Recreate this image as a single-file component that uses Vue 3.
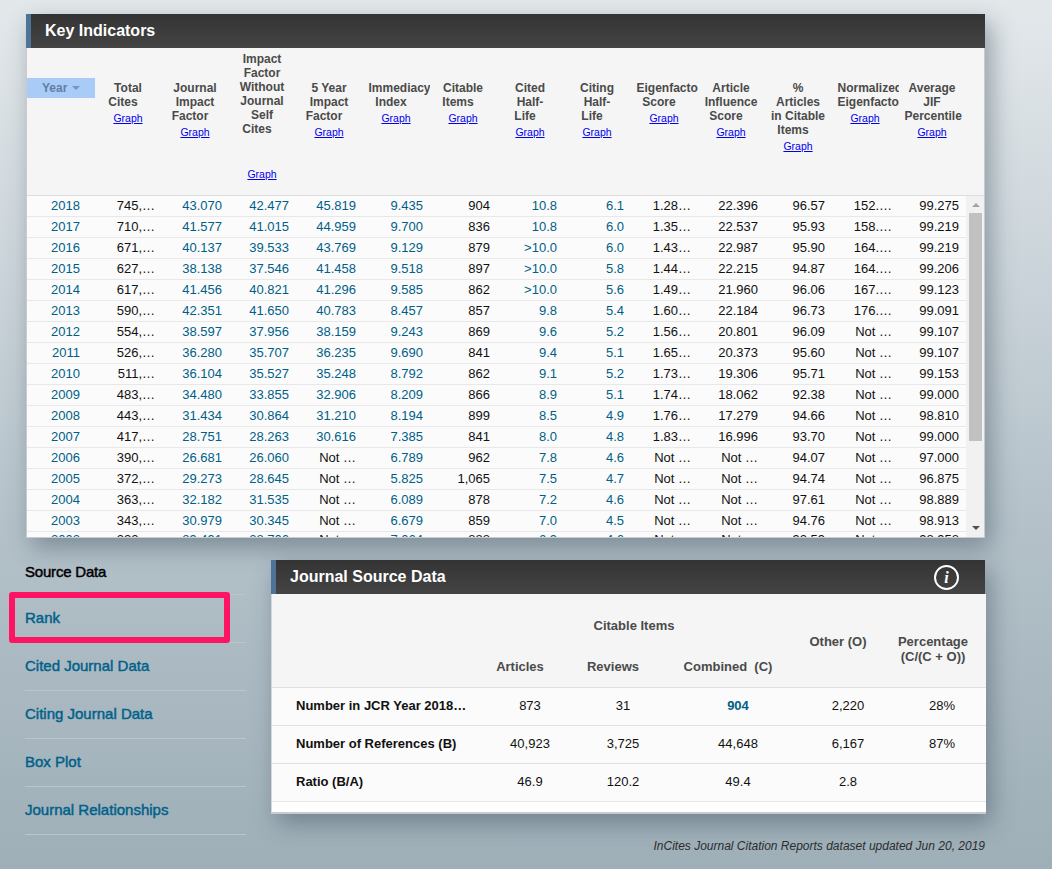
<script setup>
const heads = [
  { t: 'Total Cites' }, { t: 'Journal Impact Factor' },
  { t: 'Impact Factor Without Journal Self Cites', tall: true },
  { t: '5 Year Impact Factor' }, { t: 'Immediacy Index' }, { t: 'Citable Items' },
  { t: 'Cited Half-Life' }, { t: 'Citing Half-Life' }, { t: 'Eigenfactor Score' },
  { t: 'Article Influence Score' }, { t: '% Articles in Citable Items' },
  { t: 'Normalized Eigenfactor' }, { t: 'Average JIF Percentile' }
]
const teal = [0, 2, 3, 4, 5, 7, 8]
const n = 'Not …'
const raw = [
  ['2018','745,…','43.070','42.477','45.819','9.435','904','10.8','6.1','1.28…','22.396','96.57','152.…','99.275'],
  ['2017','710,…','41.577','41.015','44.959','9.700','836','10.8','6.0','1.35…','22.537','95.93','158.…','99.219'],
  ['2016','671,…','40.137','39.533','43.769','9.129','879','>10.0','6.0','1.43…','22.987','95.90','164.…','99.219'],
  ['2015','627,…','38.138','37.546','41.458','9.518','897','>10.0','5.8','1.44…','22.215','94.87','164.…','99.206'],
  ['2014','617,…','41.456','40.821','41.296','9.585','862','>10.0','5.6','1.49…','21.960','96.06','167.…','99.123'],
  ['2013','590,…','42.351','41.650','40.783','8.457','857','9.8','5.4','1.60…','22.184','96.73','176.…','99.091'],
  ['2012','554,…','38.597','37.956','38.159','9.243','869','9.6','5.2','1.56…','20.801','96.09',n,'99.107'],
  ['2011','526,…','36.280','35.707','36.235','9.690','841','9.4','5.1','1.65…','20.373','95.60',n,'99.107'],
  ['2010','511,…','36.104','35.527','35.248','8.792','862','9.1','5.2','1.73…','19.306','95.71',n,'99.153'],
  ['2009','483,…','34.480','33.855','32.906','8.209','866','8.9','5.1','1.74…','18.062','92.38',n,'99.000'],
  ['2008','443,…','31.434','30.864','31.210','8.194','899','8.5','4.9','1.76…','17.279','94.66',n,'98.810'],
  ['2007','417,…','28.751','28.263','30.616','7.385','841','8.0','4.8','1.83…','16.996','93.70',n,'99.000'],
  ['2006','390,…','26.681','26.060',n,'6.789','962','7.8','4.6',n,n,'94.07',n,'97.000'],
  ['2005','372,…','29.273','28.645',n,'5.825','1,065','7.5','4.7',n,n,'94.74',n,'96.875'],
  ['2004','363,…','32.182','31.535',n,'6.089','878','7.2','4.6',n,n,'97.61',n,'98.889'],
  ['2003','343,…','30.979','30.345',n,'6.679','859','7.0','4.5',n,n,'94.76',n,'98.913'],
  ['2002','322,…','29.491','28.706',n,'7.064','888','6.9','4.6',n,n,'92.59',n,'98.958']
]
const rows = raw.map(r => r.map((v, i) => ({ v, teal: teal.includes(i) && v !== n })))
const nav = ['Rank', 'Cited Journal Data', 'Citing Journal Data', 'Box Plot', 'Journal Relationships']
const src = [
  ['Number in JCR Year 2018…', '873', '31', '904', '2,220', '28%'],
  ['Number of References (B)', '40,923', '3,725', '44,648', '6,167', '87%'],
  ['Ratio (B/A)', '46.9', '120.2', '49.4', '2.8', '']
]
</script>

<template>
  <div class="page">
    <section class="card key">
      <h2 class="title">Key Indicators</h2>
      <div class="kbody">
        <div class="khead">
          <div class="yearcell"><div class="year">Year<i class="tri"></i></div></div>
          <div v-for="h in heads" :key="h.t" class="hcell" :class="{ tall: h.tall }">
            <div class="hname">{{ h.t }}&nbsp;&nbsp;&nbsp;</div>
            <a class="graph" href="#">Graph</a>
          </div>
        </div>
        <div class="kmain">
          <div class="krows">
            <div v-for="r in rows" :key="r[0].v" class="krow">
              <div v-for="(c, i) in r" :key="i" class="kc" :class="{ teal: c.teal, y: i === 0 }">{{ c.v }}</div>
            </div>
          </div>
          <div class="sbar">
            <i class="up"></i>
            <div class="thumb"></div>
            <i class="down"></i>
          </div>
        </div>
      </div>
    </section>

    <div class="lower">
      <nav class="side">
        <div class="sideitem head">Source Data</div>
        <div v-for="(l, i) in nav" :key="l" class="sideitem">
          <a href="#">{{ l }}</a>
          <div v-if="i === 0" class="mark"></div>
        </div>
      </nav>
      <div class="right">
        <section class="card source">
          <div class="title stitle">
            <span>Journal Source Data</span>
            <span class="info">i</span>
          </div>
          <div class="sbody">
            <div class="shead">
              <div class="citable">Citable Items</div>
              <div class="sh a">Articles</div>
              <div class="sh b">Reviews</div>
              <div class="sh c">Combined&nbsp; (C)</div>
              <div class="sh2 d">Other (O)</div>
              <div class="sh2 e">Percentage<br>(C/(C + O))</div>
            </div>
            <div v-for="r in src" :key="r[0]" class="srow">
              <div class="slabel">{{ r[0] }}</div>
              <div v-for="(c, i) in r.slice(1)" :key="i" class="sc" :class="{ hl: c === '904', pct: i === 4 }">{{ c }}</div>
            </div>
          </div>
        </section>
        <p class="foot">InCites Journal Citation Reports dataset updated Jun 20, 2019</p>
      </div>
    </div>
  </div>
</template>

<style>
html, body { margin: 0; }
body { background: linear-gradient(180deg, #e3e8eb 0%, #b4c1c9 60%, #9eafb8 100%); min-height: 869px; }
</style>

<style scoped>
.page {
  box-sizing: border-box;
  height: 869px;
  overflow: hidden;
  padding: 14px 0 0 25px;
  font-family: "Liberation Sans", Arial, sans-serif;
  font-size: 13px;
}
.card { box-shadow: 6px 9px 22px rgba(45, 65, 78, 0.42); }
.key { margin-left: 1px; width: 959px; }
.title {
  box-sizing: border-box;
  height: 34px;
  margin: 0;
  padding-left: 14px;
  border-left: 5px solid #4f7396;
  background: linear-gradient(180deg, #333333, #444444);
  color: #fff;
  font-size: 16px;
  font-weight: bold;
  line-height: 33px;
}
.kbody {
  border: solid #c9cbcc;
  border-width: 0 1px 1px 1px;
  background: #f5f5f5;
}
.khead {
  display: flex;
  height: 148px;
  box-sizing: border-box;
  border-bottom: 1px solid #dcdcdc;
}
.yearcell { width: 68px; flex: none; margin-right: -0.5px; padding-top: 30px; box-sizing: border-box; }
.year {
  height: 20px;
  background: #a9cbf7;
  color: #5f7fa5;
  font-size: 12px;
  font-weight: bold;
  line-height: 20px;
  padding-left: 15px;
}
.tri {
  display: inline-block;
  margin-left: 5px;
  vertical-align: 2px;
  border: 4px solid transparent;
  border-top-color: #7596c0;
  border-bottom: 0;
}
.hcell {
  box-sizing: border-box;
  flex: none;
  width: 67px;
  padding: 33px 6px 0;
  overflow: hidden;
  text-align: center;
  font-size: 12px;
  font-weight: bold;
  line-height: 14px;
  color: #4a4a4a;
}
.hcell.tall { padding-top: 4px; }
.graph {
  display: block;
  margin: 2px -6px 0;
  font-size: 10.5px;
  font-weight: normal;
  color: #0000ee;
  text-decoration: underline;
}
.tall .graph { margin-top: 31px; }
.kmain { display: flex; height: 341px; overflow: hidden; }
.krows { width: 939px; flex: none; background: #fbfbfb; }
.krow { display: flex; height: 21px; box-sizing: border-box; border-bottom: 1px solid #e8e8e8; }
.krow:last-child .kc { line-height: 15px; }
.kc {
  box-sizing: border-box;
  width: 67px;
  flex: none;
  padding-right: 7px;
  text-align: right;
  line-height: 19px;
  color: #111;
  white-space: nowrap;
}
.kc.y { width: 68px; padding-right: 15px; }
.teal { color: #005f87; }
.kc.y { color: #005f87; }
.sbar {
  position: relative;
  flex: 1;
  background: #f1f1f1;
  display: flex;
  flex-direction: column;
  align-items: center;
  padding-left: 1px;
  box-sizing: border-box;
}
.up {
  margin-top: 7px;
  border: 4px solid transparent;
  border-top: 0;
  border-bottom: 4px solid #a3a3a3;
  width: 0;
}
.thumb { width: 13px; height: 228px; margin-top: 6px; background: #c1c1c1; }
.down {
  margin-top: 85px;
  border: 4px solid transparent;
  border-bottom: 0;
  border-top: 4px solid #505050;
  width: 0;
}
.lower { display: flex; margin-top: 8px; }
.side { width: 221px; flex: none; margin-right: 25px; padding-top: 1px; }
.sideitem {
  position: relative;
  box-sizing: border-box;
  height: 48px;
  line-height: 45px;
  border-bottom: 1px solid #bcc5ca;
  font-size: 15px;
  -webkit-text-stroke: 0.45px currentColor;
}
.sideitem.head { color: #000; padding-top: 2px; letter-spacing: -0.2px; }
.sideitem a { color: #00618a; text-decoration: none; }
.mark {
  position: absolute;
  left: -16px;
  top: -3px;
  width: 221px;
  height: 51px;
  box-sizing: border-box;
  border: 6px solid #ff1464;
  border-radius: 3px;
}
.right { width: 714px; padding-top: 14px; }
.stitle {
  display: flex;
  justify-content: space-between;
  align-items: center;
  padding-right: 26px;
  line-height: 31px;
}
.stitle span:first-child { margin-top: -2px; }
.info {
  box-sizing: border-box;
  width: 25px;
  height: 25px;
  border: 2px solid #fff;
  border-radius: 50%;
  font-family: "Liberation Serif", serif;
  font-style: italic;
  font-size: 16px;
  line-height: 21px;
  text-align: center;
}
.sbody {
  margin-right: -1px;
  background: #fff;
  border-left: 1px solid #d5d7d8;
  border-bottom: 2px solid #c9cbcc;
  padding-bottom: 10px;
}
.shead {
  display: grid;
  grid-template-columns: 212px 92px 94px 136px 84px 96px;
  grid-template-rows: 52px 41px;
  height: 93px;
  background: #f5f5f5;
  font-weight: bold;
  color: #4a4a4a;
  text-align: center;
}
.citable { grid-column: 2 / span 3; grid-row: 1; padding: 25px 22px 0 0; line-height: 14px; }
.sh { grid-row: 2; padding-right: 20px; line-height: 42px; white-space: nowrap; }
.sh.a { grid-column: 2; }
.sh.b { grid-column: 3; }
.sh.c { grid-column: 4; }
.sh2 { grid-row: 1 / span 2; padding: 40px 20px 0 0; line-height: 15px; }
.sh2.d { grid-column: 5; }
.sh2.e { grid-column: 6; padding: 40px 10px 0 0; }
.srow {
  display: grid;
  grid-template-columns: 212px 92px 94px 136px 84px 96px;
  height: 38px;
  box-sizing: border-box;
  border-top: 1px solid #e0e0e0;
  background: #fbfbfb;
  line-height: 35px;
  text-align: center;
  color: #111;
}
.srow:last-child { border-bottom: 1px solid #e8e8e8; height: 39px; }
.slabel { padding-left: 24px; text-align: left; font-weight: bold; white-space: nowrap; }
.sc.hl { color: #005f87; font-weight: bold; }
.sc.pct { padding-left: 8px; }
.foot {
  margin: 25px 0 0;
  text-align: right;
  font-size: 12px;
  font-style: italic;
  line-height: 14px;
  color: #2c2c2c;
}
</style>
